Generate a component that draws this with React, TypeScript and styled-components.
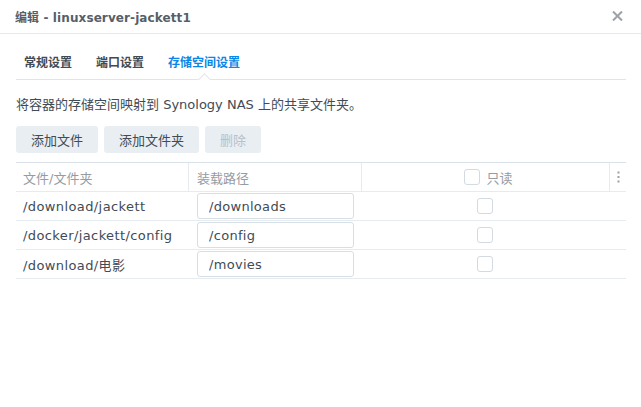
import React from 'react';
import styled, { createGlobalStyle } from 'styled-components';

const GlobalStyle = createGlobalStyle`
    html, body {
        margin: 0;
        padding: 0;
        background: #fff;
    }
    body {
        font-family: "DejaVu Sans", "Noto Sans CJK SC", sans-serif;
        font-size: 13px;
        color: #414b55;
    }
    * {
        box-sizing: border-box;
    }
`;

const Dialog = styled.div`
    width: 641px;
    height: 407px;
    background: #fff;
    display: flex;
    flex-direction: column;
`;

const Header = styled.div`
    height: 34px;
    border-bottom: 1px solid #e6e9ec;
    display: flex;
    align-items: center;
    justify-content: space-between;
    padding: 0 18px 1px 15px;
`;

const Title = styled.h1`
    margin: 0;
    font-size: 12px;
    font-weight: bold;
    letter-spacing: 0.1px;
    color: #565f69;
`;

const CloseButton = styled.button`
    border: 0;
    background: none;
    padding: 0;
    width: 12px;
    height: 12px;
    display: flex;
    align-items: center;
    justify-content: center;
    cursor: pointer;
`;

const Body = styled.div`
    padding: 0 15px 0 16px;
`;

const Tabs = styled.div`
    display: flex;
    align-items: flex-end;
    gap: 24px;
    height: 46px;
    padding: 0 8px;
    border-bottom: 1px solid #dfe5eb;
`;

const Tab = styled.div<{ $active?: boolean }>`
    position: relative;
    font-size: 12px;
    font-weight: bold;
    line-height: 16px;
    padding-bottom: 8px;
    color: ${props => (props.$active ? '#0a86e6' : '#414b55')};

    &::after {
        content: '';
        display: ${props => (props.$active ? 'block' : 'none')};
        position: absolute;
        left: 50%;
        bottom: -5px;
        width: 8px;
        height: 8px;
        margin-left: -4px;
        background: #fff;
        border-left: 1px solid #dfe5eb;
        border-top: 1px solid #dfe5eb;
        transform: rotate(45deg);
    }
`;

const Description = styled.p`
    margin: 15px 0 0;
    line-height: 20px;
`;

const Toolbar = styled.div`
    display: flex;
    gap: 6px;
    margin-top: 11px;
`;

const ToolButton = styled.button`
    height: 27px;
    padding: 0 15px;
    border: 0;
    border-radius: 3px;
    background: #e9eef3;
    font-family: inherit;
    font-size: 13px;
    color: #414b55;

    &:disabled {
        color: #b8c0c8;
    }
`;

const Table = styled.div`
    margin-top: 9px;
    width: 610px;
    border-top: 1px solid #d9e2eb;
`;

const Row = styled.div<{ $head?: boolean }>`
    display: grid;
    grid-template-columns: 172px 173px 248px 17px;
    height: 29px;
    border-bottom: 1px solid #e6ebf0;
    color: ${props => (props.$head ? '#959ca4' : '#414b55')};
    letter-spacing: ${props => (props.$head ? '0' : '0.4px')};
`;

const Cell = styled.div<{ $divider?: boolean; $center?: boolean; $pad?: number }>`
    display: flex;
    align-items: center;
    justify-content: ${props => (props.$center ? 'center' : 'flex-start')};
    padding-left: ${props => (props.$center ? 0 : props.$pad ?? 7)}px;
    border-left: ${props => (props.$divider ? '1px solid #e6ebf0' : '0')};
    white-space: nowrap;
    overflow: hidden;
`;

const PathInput = styled.input`
    width: 157px;
    height: 26px;
    border: 1px solid #d6dee6;
    border-radius: 3px;
    padding: 0 0 0 11px;
    font-family: inherit;
    font-size: 13px;
    letter-spacing: 0.3px;
    color: #414b55;
    outline: none;
`;

const Check = styled.span`
    display: inline-block;
    width: 16px;
    height: 16px;
    border: 1px solid #d3dae2;
    border-radius: 3px;
    background: #fff;
`;

const CheckLabel = styled.span`
    display: flex;
    align-items: center;
    gap: 6px;
    margin-left: 6px;
`;

const mounts = [
    { host: '/download/jackett', container: '/downloads' },
    { host: '/docker/jackett/config', container: '/config' },
    { host: '/download/电影', container: '/movies' },
];

const App = () => {
    return (
        <Dialog>
            <GlobalStyle />
            <Header>
                <Title>编辑 - linuxserver-jackett1</Title>
                <CloseButton aria-label="close">
                    <svg width="11" height="10" viewBox="0 0 11 10">
                        <path d="M1 0.5 L10 9.5 M10 0.5 L1 9.5" stroke="#9ba1a7" strokeWidth="2" />
                    </svg>
                </CloseButton>
            </Header>
            <Body>
                <Tabs>
                    <Tab>常规设置</Tab>
                    <Tab>端口设置</Tab>
                    <Tab $active>存储空间设置</Tab>
                </Tabs>
                <Description>将容器的存储空间映射到 Synology NAS 上的共享文件夹。</Description>
                <Toolbar>
                    <ToolButton type="button">添加文件</ToolButton>
                    <ToolButton type="button">添加文件夹</ToolButton>
                    <ToolButton type="button" disabled>删除</ToolButton>
                </Toolbar>
                <Table>
                    <Row $head>
                        <Cell>文件/文件夹</Cell>
                        <Cell $divider $pad={8}>装载路径</Cell>
                        <Cell $divider $center>
                            <CheckLabel>
                                <Check />
                                只读
                            </CheckLabel>
                        </Cell>
                        <Cell $divider $center>
                            <svg width="3" height="12" viewBox="0 0 3 12">
                                <rect x="0.5" y="0.5" width="2" height="2" fill="#9ba1a7" />
                                <rect x="0.5" y="5" width="2" height="2" fill="#9ba1a7" />
                                <rect x="0.5" y="9.5" width="2" height="2" fill="#9ba1a7" />
                            </svg>
                        </Cell>
                    </Row>
                    {mounts.map(m => (
                        <Row key={m.host}>
                            <Cell>{m.host}</Cell>
                            <Cell $pad={9}>
                                <PathInput defaultValue={m.container} />
                            </Cell>
                            <Cell $center>
                                <Check />
                            </Cell>
                            <Cell />
                        </Row>
                    ))}
                </Table>
            </Body>
        </Dialog>
    );
};

export default App;
